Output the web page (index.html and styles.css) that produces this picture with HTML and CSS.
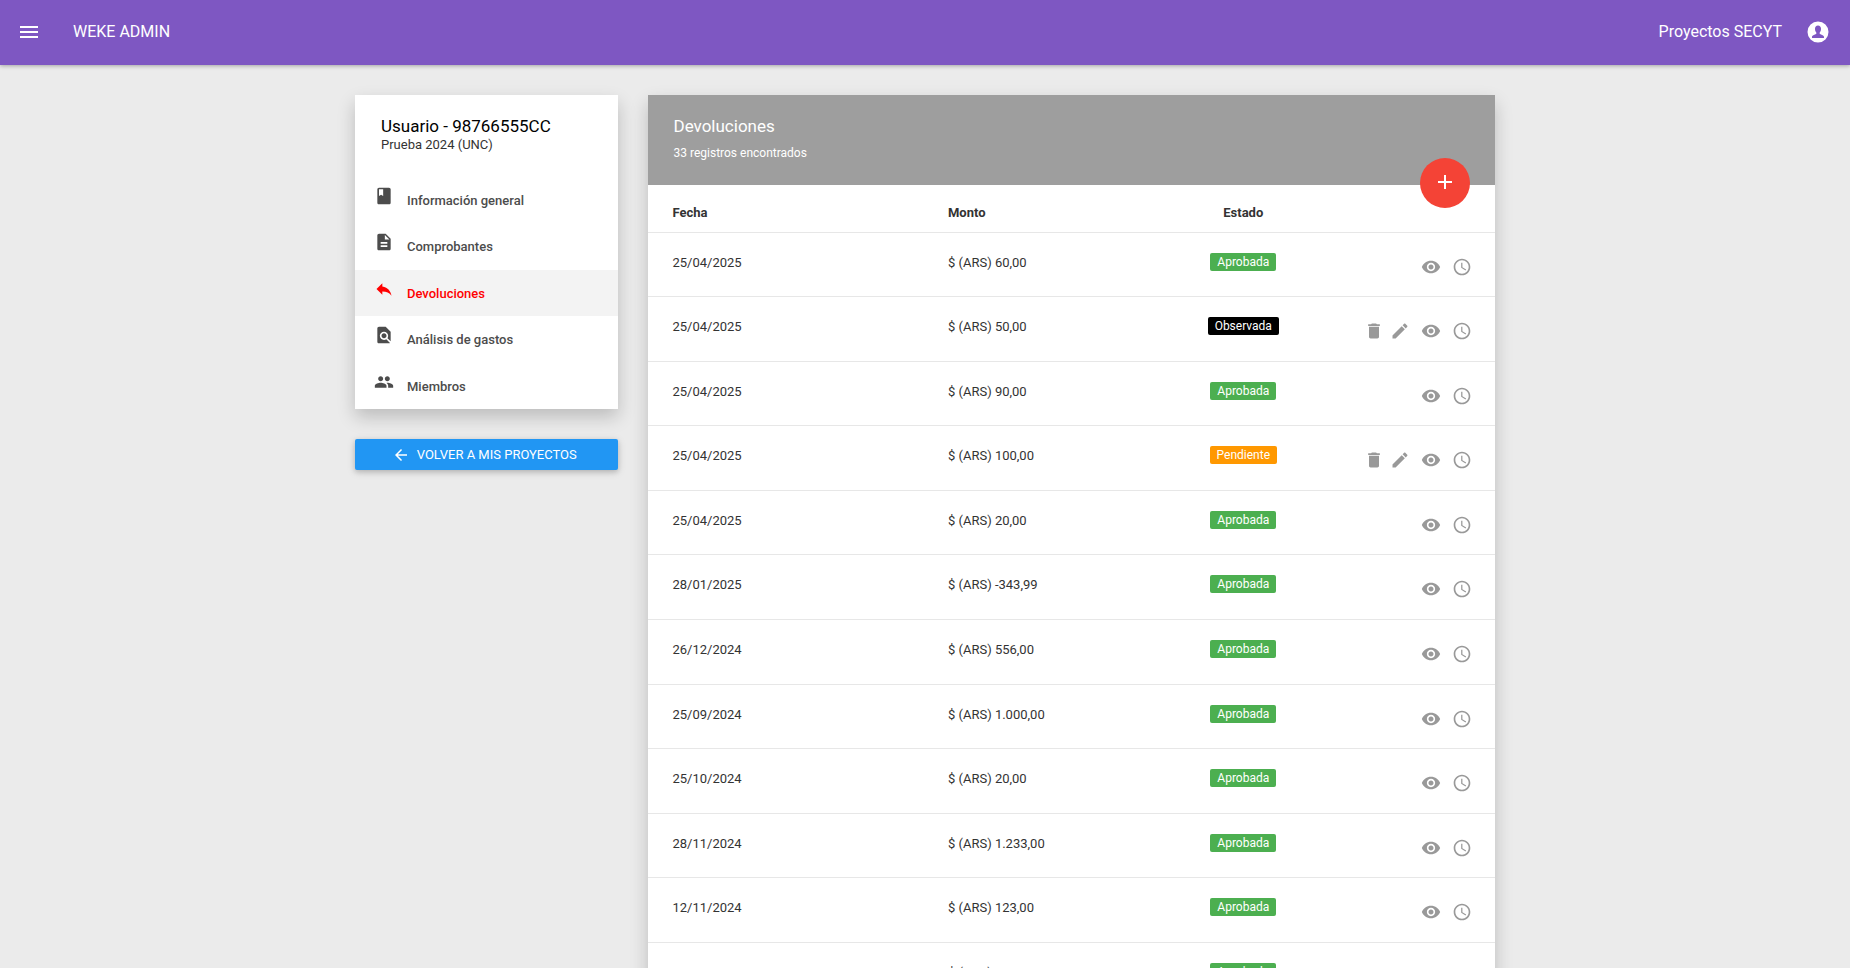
FILE: index.html
```html
<!DOCTYPE html>
<html lang="es">
  <head>
    <meta charset="UTF-8" />
    <meta name="viewport" content="width=device-width, initial-scale=1.0" />
    <title>Weke Admin - Devoluciones</title>
    <link rel="stylesheet" href="styles.css">
  </head>
  <body>
    <!-- Icons -->
    <svg class="sprite" aria-hidden="true">
      <symbol id="menu" viewBox="0 0 24 24"><path d="M3 18h18v-2H3v2zm0-5h18v-2H3v2zm0-7v2h18V6H3z"/></symbol>
      <symbol id="account" viewBox="0 0 24 24"><path fill-rule="evenodd" d="M12 1.500a10.500 10.500 0 1 0 0 21a10.500 10.500 0 1 0 0-21zM12 5.500c1.900 0 3 1.400 3 3.300 0 1.600-.5 2.900-1.300 3.700v1.300c.3.800 4.300 1.200 4.300 3.200v1H6v-1c0-2 4-2.400 4.300-3.200v-1.300C9.500 11.700 9 10.400 9 8.800c0-1.900 1.100-3.300 3-3.300z"/></symbol>
      <symbol id="book" viewBox="0 0 24 24"><path d="M18 2H6c-1.100 0-2 .9-2 2v16c0 1.100.9 2 2 2h12c1.100 0 2-.9 2-2V4c0-1.100-.9-2-2-2zM6 4h5v8l-2.500-1.500L6 12V4z"/></symbol>
      <symbol id="file" viewBox="0 0 24 24"><path d="M14 2H6c-1.100 0-2 .9-2 2v16c0 1.100.9 2 2 2h12c1.100 0 2-.9 2-2V8l-6-6zm2 16H8v-2h8v2zm0-4H8v-2h8v2zm-3-5V3.500L18.500 9H13z"/></symbol>
      <symbol id="reply" viewBox="0 0 24 24"><path d="M10 9V5l-7 7 7 7v-4.100c5 0 8.500 1.600 11 5.100-1-5-4-10-11-11z"/></symbol>
      <symbol id="find" viewBox="0 0 24 24"><path d="M20 19.590V8l-6-6H6c-1.100 0-2 .9-2 2v16c0 1.100.9 2 2 2h12c.45 0 .85-.15 1.190-.4l-4.430-4.430c-.8.520-1.740.830-2.760.830-2.760 0-5-2.240-5-5s2.240-5 5-5 5 2.240 5 5c0 1.020-.31 1.960-.83 2.750L20 19.590zM9 13c0 1.660 1.340 3 3 3s3-1.340 3-3-1.340-3-3-3-3 1.340-3 3z"/></symbol>
      <symbol id="people" viewBox="0 0 24 24"><path d="M16 11c1.660 0 2.990-1.340 2.990-3S17.660 5 16 5s-3 1.340-3 3 1.340 3 3 3zm-8 0c1.660 0 2.990-1.340 2.990-3S9.660 5 8 5 5 6.340 5 8s1.340 3 3 3zm0 2c-2.330 0-7 1.170-7 3.500V19h14v-2.500c0-2.330-4.670-3.500-7-3.500zm8 0c-.29 0-.62.020-.97.050 1.160.840 1.970 1.970 1.970 3.450V19h6v-2.500c0-2.330-4.670-3.500-7-3.500z"/></symbol>
      <symbol id="back" viewBox="0 0 24 24"><path d="M20 11H7.830l5.590-5.590L12 4l-8 8 8 8 1.410-1.410L7.830 13H20v-2z"/></symbol>
      <symbol id="plus" viewBox="0 0 24 24"><path d="M19 13h-6v6h-2v-6H5v-2h6V5h2v6h6v2z"/></symbol>
      <symbol id="delete" viewBox="0 0 24 24"><path d="M6 19c0 1.100.9 2 2 2h8c1.100 0 2-.9 2-2V7H6v12zM19 4h-3.500l-1-1h-5l-1 1H5v2h14V4z"/></symbol>
      <symbol id="edit" viewBox="0 0 24 24"><path d="M3 17.250V21h3.750L17.810 9.940l-3.750-3.750L3 17.250zM20.710 7.040c.39-.39.39-1.020 0-1.410l-2.340-2.340c-.39-.39-1.020-.39-1.410 0l-1.830 1.830 3.750 3.750 1.830-1.830z"/></symbol>
      <symbol id="eye" viewBox="0 0 24 24"><path d="M12 4.500C7 4.500 2.730 7.610 1 12c1.730 4.390 6 7.500 11 7.500s9.270-3.110 11-7.500c-1.730-4.390-6-7.500-11-7.500zM12 17c-2.760 0-5-2.240-5-5s2.240-5 5-5 5 2.240 5 5-2.240 5-5 5zm0-8c-1.660 0-3 1.340-3 3s1.340 3 3 3 3-1.340 3-3-1.340-3-3-3z"/></symbol>
      <symbol id="clock" viewBox="0 0 24 24"><path d="M11.990 2C6.470 2 2 6.480 2 12s4.470 10 9.990 10C17.520 22 22 17.520 22 12S17.520 2 11.990 2zM12 20c-4.420 0-8-3.580-8-8s3.580-8 8-8 8 3.580 8 8-3.580 8-8 8zm.5-13H11v6l5.250 3.150.75-1.230-4.500-2.670V7z"/></symbol>
    </svg>

    <header class="topbar">
      <button class="icon-button" aria-label="Menú"><svg><use href="#menu"/></svg></button>
      <a class="brand" href="#">WEKE ADMIN</a>
      <span class="project">Proyectos SECYT</span>
      <button class="icon-button" aria-label="Cuenta"><svg><use href="#account"/></svg></button>
    </header>

    <div class="container">
      <aside class="sidebar">
        <div class="card">
          <div class="user">
            <h2>Usuario - 98766555CC</h2>
            <p>Prueba 2024 (UNC)</p>
          </div>
          <nav class="menu">
            <a href="#"><svg><use href="#book"/></svg>Información general</a>
            <a href="#"><svg><use href="#file"/></svg>Comprobantes</a>
            <a href="#" class="active"><svg><use href="#reply"/></svg>Devoluciones</a>
            <a href="#"><svg><use href="#find"/></svg>Análisis de gastos</a>
            <a href="#"><svg><use href="#people"/></svg>Miembros</a>
          </nav>
        </div>
        <button class="back-button"><svg><use href="#back"/></svg>VOLVER A MIS PROYECTOS</button>
      </aside>

      <main class="content">
        <div class="card">
          <div class="card-header">
            <h2>Devoluciones</h2>
            <p>33 registros encontrados</p>
            <button class="add-button" aria-label="Agregar"><svg><use href="#plus"/></svg></button>
          </div>
          <table class="table">
            <thead>
              <tr>
                <th class="col-date">Fecha</th>
                <th class="col-amount">Monto</th>
                <th class="col-status">Estado</th>
                <th></th>
              </tr>
            </thead>
            <tbody>
              <tr>
                <td>25/04/2025</td>
                <td>$ (ARS) 60,00</td>
                <td class="status"><span class="label approved">Aprobada</span></td>
                <td class="actions">
                  <div>
                    <button aria-label="Ver"><svg><use href="#eye"/></svg></button>
                    <button aria-label="Historial"><svg><use href="#clock"/></svg></button>
                  </div>
                </td>
              </tr>
              <tr>
                <td>25/04/2025</td>
                <td>$ (ARS) 50,00</td>
                <td class="status"><span class="label observed">Observada</span></td>
                <td class="actions">
                  <div>
                    <button aria-label="Eliminar"><svg><use href="#delete"/></svg></button>
                    <button class="edit" aria-label="Editar"><svg><use href="#edit"/></svg></button>
                    <button aria-label="Ver"><svg><use href="#eye"/></svg></button>
                    <button aria-label="Historial"><svg><use href="#clock"/></svg></button>
                  </div>
                </td>
              </tr>
              <tr>
                <td>25/04/2025</td>
                <td>$ (ARS) 90,00</td>
                <td class="status"><span class="label approved">Aprobada</span></td>
                <td class="actions">
                  <div>
                    <button aria-label="Ver"><svg><use href="#eye"/></svg></button>
                    <button aria-label="Historial"><svg><use href="#clock"/></svg></button>
                  </div>
                </td>
              </tr>
              <tr>
                <td>25/04/2025</td>
                <td>$ (ARS) 100,00</td>
                <td class="status"><span class="label pending">Pendiente</span></td>
                <td class="actions">
                  <div>
                    <button aria-label="Eliminar"><svg><use href="#delete"/></svg></button>
                    <button class="edit" aria-label="Editar"><svg><use href="#edit"/></svg></button>
                    <button aria-label="Ver"><svg><use href="#eye"/></svg></button>
                    <button aria-label="Historial"><svg><use href="#clock"/></svg></button>
                  </div>
                </td>
              </tr>
              <tr>
                <td>25/04/2025</td>
                <td>$ (ARS) 20,00</td>
                <td class="status"><span class="label approved">Aprobada</span></td>
                <td class="actions">
                  <div>
                    <button aria-label="Ver"><svg><use href="#eye"/></svg></button>
                    <button aria-label="Historial"><svg><use href="#clock"/></svg></button>
                  </div>
                </td>
              </tr>
              <tr>
                <td>28/01/2025</td>
                <td>$ (ARS) -343,99</td>
                <td class="status"><span class="label approved">Aprobada</span></td>
                <td class="actions">
                  <div>
                    <button aria-label="Ver"><svg><use href="#eye"/></svg></button>
                    <button aria-label="Historial"><svg><use href="#clock"/></svg></button>
                  </div>
                </td>
              </tr>
              <tr>
                <td>26/12/2024</td>
                <td>$ (ARS) 556,00</td>
                <td class="status"><span class="label approved">Aprobada</span></td>
                <td class="actions">
                  <div>
                    <button aria-label="Ver"><svg><use href="#eye"/></svg></button>
                    <button aria-label="Historial"><svg><use href="#clock"/></svg></button>
                  </div>
                </td>
              </tr>
              <tr>
                <td>25/09/2024</td>
                <td>$ (ARS) 1.000,00</td>
                <td class="status"><span class="label approved">Aprobada</span></td>
                <td class="actions">
                  <div>
                    <button aria-label="Ver"><svg><use href="#eye"/></svg></button>
                    <button aria-label="Historial"><svg><use href="#clock"/></svg></button>
                  </div>
                </td>
              </tr>
              <tr>
                <td>25/10/2024</td>
                <td>$ (ARS) 20,00</td>
                <td class="status"><span class="label approved">Aprobada</span></td>
                <td class="actions">
                  <div>
                    <button aria-label="Ver"><svg><use href="#eye"/></svg></button>
                    <button aria-label="Historial"><svg><use href="#clock"/></svg></button>
                  </div>
                </td>
              </tr>
              <tr>
                <td>28/11/2024</td>
                <td>$ (ARS) 1.233,00</td>
                <td class="status"><span class="label approved">Aprobada</span></td>
                <td class="actions">
                  <div>
                    <button aria-label="Ver"><svg><use href="#eye"/></svg></button>
                    <button aria-label="Historial"><svg><use href="#clock"/></svg></button>
                  </div>
                </td>
              </tr>
              <tr>
                <td>12/11/2024</td>
                <td>$ (ARS) 123,00</td>
                <td class="status"><span class="label approved">Aprobada</span></td>
                <td class="actions">
                  <div>
                    <button aria-label="Ver"><svg><use href="#eye"/></svg></button>
                    <button aria-label="Historial"><svg><use href="#clock"/></svg></button>
                  </div>
                </td>
              </tr>
              <tr>
                <td>12/11/2024</td>
                <td>$ (ARS) 20,00</td>
                <td class="status"><span class="label approved">Aprobada</span></td>
                <td class="actions">
                  <div>
                    <button aria-label="Ver"><svg><use href="#eye"/></svg></button>
                    <button aria-label="Historial"><svg><use href="#clock"/></svg></button>
                  </div>
                </td>
              </tr>
            </tbody>
          </table>
        </div>
      </main>
    </div>
  </body>
</html>
```

FILE: styles.css
```css
* {
  box-sizing: border-box;
}
body {
  margin: 0;
  background-color: #ebebeb;
  font-family: Roboto, sans-serif;
  font-size: 13px;
  line-height: 1.42857143;
  color: #333;
}
h2,
p {
  margin: 0;
  font-weight: 400;
}
a {
  color: inherit;
  text-decoration: none;
}
button {
  padding: 0;
  border: 0;
  background: none;
  color: inherit;
  font: inherit;
  cursor: pointer;
}
svg {
  display: block;
  flex: none;
  width: 20px;
  height: 20px;
  fill: currentColor;
}
.sprite {
  display: none;
}

/* Top bar */
.topbar {
  display: flex;
  align-items: center;
  height: 65px;
  padding: 0 20px 0 17px;
  background-color: #7e57c2;
  box-shadow: 0 1px 4px rgba(0, 0, 0, 0.3);
  color: #fff;
  font-size: 16px;
}
.icon-button {
  padding-bottom: 2px;
}
.icon-button svg {
  width: 24px;
  height: 24px;
}
.brand {
  margin-left: 32px;
}
.project {
  margin-left: auto;
  margin-right: 24px;
}

/* Layout */
.container {
  display: flex;
  align-items: flex-start;
  max-width: 1170px;
  margin: 0 auto;
  padding: 30px 0;
}
.sidebar {
  width: 25%;
  padding: 0 15px;
}
.content {
  width: 75%;
  padding: 0 15px;
}
.card {
  margin-bottom: 30px;
  background-color: #fff;
  box-shadow: 0 8px 17px rgba(0, 0, 0, 0.2);
}

/* Sidebar */
.user {
  padding: 21px 26px 22px;
}
.user h2 {
  color: #000;
  font-size: 17px;
  line-height: 20px;
}
.menu a {
  display: flex;
  gap: 13px;
  padding: 15px 19px 13px;
  color: #4c4c4c;
  font-weight: 500;
}
.menu svg {
  margin: -6px 0;
}
.menu .active {
  background-color: #f3f3f3;
  color: #f00;
}
.back-button {
  display: flex;
  align-items: center;
  justify-content: center;
  gap: 7px;
  width: 100%;
  height: 31px;
  padding: 1px 4px 0 0;
  border-radius: 2px;
  background-color: #2196f3;
  box-shadow: 0 2px 5px rgba(0, 0, 0, 0.16), 0 2px 10px rgba(0, 0, 0, 0.12);
  color: #fff;
}
.back-button svg {
  width: 18px;
  height: 18px;
}

/* Returns card */
.card-header {
  position: relative;
  height: 90px;
  padding: 19px 26px;
  background-color: #9e9e9e;
  color: #fff;
}
.card-header h2 {
  font-size: 17px;
}
.card-header p {
  margin-top: 7px;
  font-size: 12px;
}
.add-button {
  position: absolute;
  right: 25px;
  bottom: -23px;
  display: flex;
  align-items: center;
  justify-content: center;
  width: 50px;
  height: 50px;
  padding-bottom: 2px;
  border-radius: 50%;
  background-color: #f44336;
}
.add-button svg {
  width: 24px;
  height: 24px;
}

/* Table */
.table {
  width: 100%;
  table-layout: fixed;
  border-spacing: 0;
}
.table th,
.table td {
  border-bottom: 1px solid #e7e7e7;
  text-align: left;
  vertical-align: top;
}
.table th {
  padding: 19px 25px 9px;
  font-weight: 700;
}
.table td {
  padding: 21px 25px 24px;
}
.table .col-date {
  width: 32.5%;
}
.table .col-amount {
  width: 30.8%;
}
.table .col-status {
  width: 14%;
  padding-left: 0;
  padding-right: 0;
  text-align: center;
}
.table .status {
  padding: 20px 0 25px;
  text-align: center;
}
.label {
  display: inline-block;
  padding: 0 7px;
  border-radius: 2px;
  color: #fff;
  font-size: 12px;
  line-height: 18px;
  vertical-align: top;
}
.approved {
  background-color: #4caf50;
}
.observed {
  background-color: #000;
}
.pending {
  background-color: #ff9800;
}
.table .actions {
  padding: 24px 23px 0 0;
}
.actions div {
  display: flex;
  justify-content: flex-end;
  color: #999;
}
.actions button {
  margin-left: 11px;
}
.actions .edit {
  margin-left: 6px;
}
```
